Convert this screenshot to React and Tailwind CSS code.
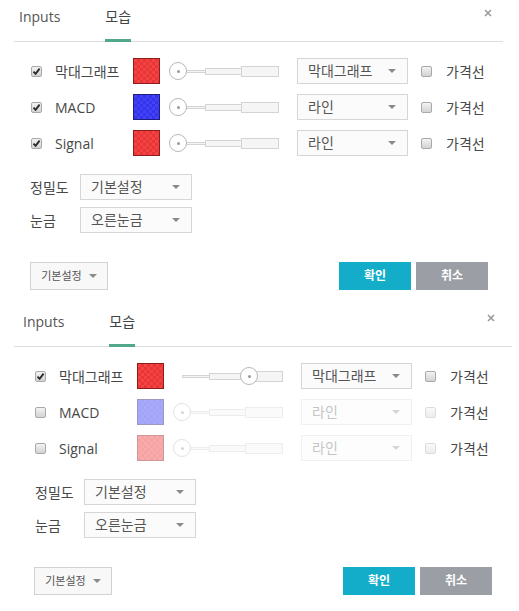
import React from 'react';

const FONT = "font-['Open_Sans','Noto_Sans_CJK_KR',sans-serif]";

function Check({ checked, dim }) {
    return (
        <div className={`relative w-[11px] h-[11px] shrink-0 rounded-[2px] border border-[#a9a9a9] bg-linear-to-b from-[#f3f3f3] to-[#d3d3d3] ${dim ? 'opacity-40' : ''}`}>
            {checked && (
                <svg width="9" height="9" viewBox="0 0 9 9" className="absolute left-0 top-0">
                    <path d="M1.5 4.6 L3.6 6.8 L7.6 1.6" fill="none" stroke="#2b2b2b" strokeWidth="1.9" />
                </svg>
            )}
        </div>
    );
}

function Arrow() {
    return <div className="w-0 h-0 border-l-[4px] border-r-[4px] border-t-[4px] border-l-transparent border-r-transparent border-t-[#8a8a8a]" />;
}

function Swatch({ color, dim }) {
    const fill = color === 'blue'
        ? 'border-[#1e1e7c] bg-[image:repeating-conic-gradient(#3434ee_0_25%,#4242f2_0_50%)]'
        : 'border-[#8c1d1d] bg-[image:repeating-conic-gradient(#ea3535_0_25%,#f24444_0_50%)]';
    return <div className={`w-[27px] h-[26px] shrink-0 border bg-[length:6px_6px] ${fill} ${dim ? 'opacity-45' : ''}`} />;
}

function Slider({ right, dim }) {
    return (
        <div className={`relative ml-[9px] w-[110px] h-[18px] shrink-0 flex items-center pl-[9px] ${dim ? 'opacity-40' : ''}`}>
            <div className="w-[28px] h-[3px] border border-[#d4d4d4] bg-[#f5f5f5]" />
            <div className="w-[37px] h-[7px] -ml-px border border-[#d4d4d4] bg-[#f5f5f5]" />
            <div className="flex-1 h-[11px] -ml-px border border-[#d4d4d4] bg-[#f5f5f5]" />
            <div className={`absolute top-0 w-[18px] h-[18px] rounded-full border border-[#b8b8b8] bg-white flex items-center justify-center ${right ? 'left-[67px]' : 'left-0'}`}>
                <div className="w-[3px] h-[3px] rounded-full bg-[#9a9a9a]" />
            </div>
        </div>
    );
}

function Select({ value, className, dim }) {
    return (
        <div className={`flex items-center justify-between h-[26px] shrink-0 border border-[#d6d6d6] bg-[#fbfbfb] pl-[10px] pr-[11px] text-[14px] leading-none text-[#555] ${dim ? 'opacity-35' : ''} ${className}`}>
            <span>{value}</span>
            <Arrow />
        </div>
    );
}

function Panel({ second }) {
    const rows = second
        ? [
            { label: '막대그래프', on: true, color: 'red', type: '막대그래프', dim: false, right: true },
            { label: 'MACD', on: false, color: 'blue', type: '라인', dim: true, right: false },
            { label: 'Signal', on: false, color: 'red', type: '라인', dim: true, right: false },
        ]
        : [
            { label: '막대그래프', on: true, color: 'red', type: '막대그래프', dim: false, right: false },
            { label: 'MACD', on: true, color: 'blue', type: '라인', dim: false, right: false },
            { label: 'Signal', on: true, color: 'red', type: '라인', dim: false, right: false },
        ];

    return (
        <div className={`relative bg-white ${second ? 'h-[306px]' : 'h-[305px]'}`}>
            {/* Header tabs */}
            <div className={`flex h-[42px] ml-[14px] border-b border-[#dedede] ${second ? 'mr-[7px] pl-[9px]' : 'mr-[16px] pl-[5px]'}`}>
                <div className="pt-[7px] leading-[20px] text-[14px] text-[#555]">Inputs</div>
                <div className="ml-[45px] -mb-px pt-[7px] leading-[20px] text-[14px] text-[#444] border-b-[3px] border-[#52a98a]">모습</div>
            </div>
            <svg width="8" height="8" viewBox="0 0 8 8" className={`absolute top-[9px] ${second ? 'right-[24px]' : 'right-[27px]'}`}>
                <path d="M1 1 L7 7 M7 1 L1 7" stroke="#9a9a9a" strokeWidth="1.6" />
            </svg>

            {/* Plot rows */}
            <div className="mt-[11px] flex flex-col">
                {rows.map((r, i) => (
                    <div key={i} className={`flex items-center h-[36px] ${second ? 'pl-[35px]' : 'pl-[31px]'}`}>
                        <Check checked={r.on} />
                        <div className="ml-[13px] w-[78px] text-[14px] text-[#484848]">{r.label}</div>
                        <Swatch color={r.color} dim={r.dim} />
                        <Slider right={r.right} dim={r.dim} />
                        <Select value={r.type} dim={r.dim} className="ml-[18px] w-[111px]" />
                        <div className="ml-[13px]"><Check dim={r.dim} /></div>
                        <div className="ml-[14px] text-[14px] text-[#484848]">가격선</div>
                    </div>
                ))}
            </div>

            {/* Precision / scale */}
            <div className={`mt-[13px] flex flex-col gap-[7px] ${second ? 'pl-[35px]' : 'pl-[30px]'}`}>
                <div className="flex items-center">
                    <div className={`text-[14px] text-[#484848] ${second ? 'w-[49px]' : 'w-[50px]'}`}>정밀도</div>
                    <Select value="기본설정" className="w-[112px]" />
                </div>
                <div className="flex items-center">
                    <div className={`text-[14px] text-[#484848] ${second ? 'w-[49px]' : 'w-[50px]'}`}>눈금</div>
                    <Select value="오른눈금" className="w-[112px]" />
                </div>
            </div>

            {/* Footer */}
            <div className={`mt-[29px] flex items-center justify-between ${second ? 'pl-[34px] pr-[27px]' : 'pl-[30px] pr-[31px]'}`}>
                <div className="flex items-center justify-center gap-[7px] w-[78px] h-[28px] border border-[#d2d2d2] bg-[#f8f8f8] text-[11px] text-[#555]">
                    <span>기본설정</span>
                    <Arrow />
                </div>
                <div className="flex gap-[5px]">
                    <button className="w-[72px] h-[28px] bg-[#14adc9] text-white text-[12px] font-bold">확인</button>
                    <button className="w-[72px] h-[28px] bg-[#9c9ea5] text-white text-[12px] font-bold">취소</button>
                </div>
            </div>
        </div>
    );
}

export default function App() {
    return (
        <div className={`w-[519px] h-[611px] bg-white overflow-hidden ${FONT}`}>
            <Panel />
            <Panel second />
        </div>
    );
}
